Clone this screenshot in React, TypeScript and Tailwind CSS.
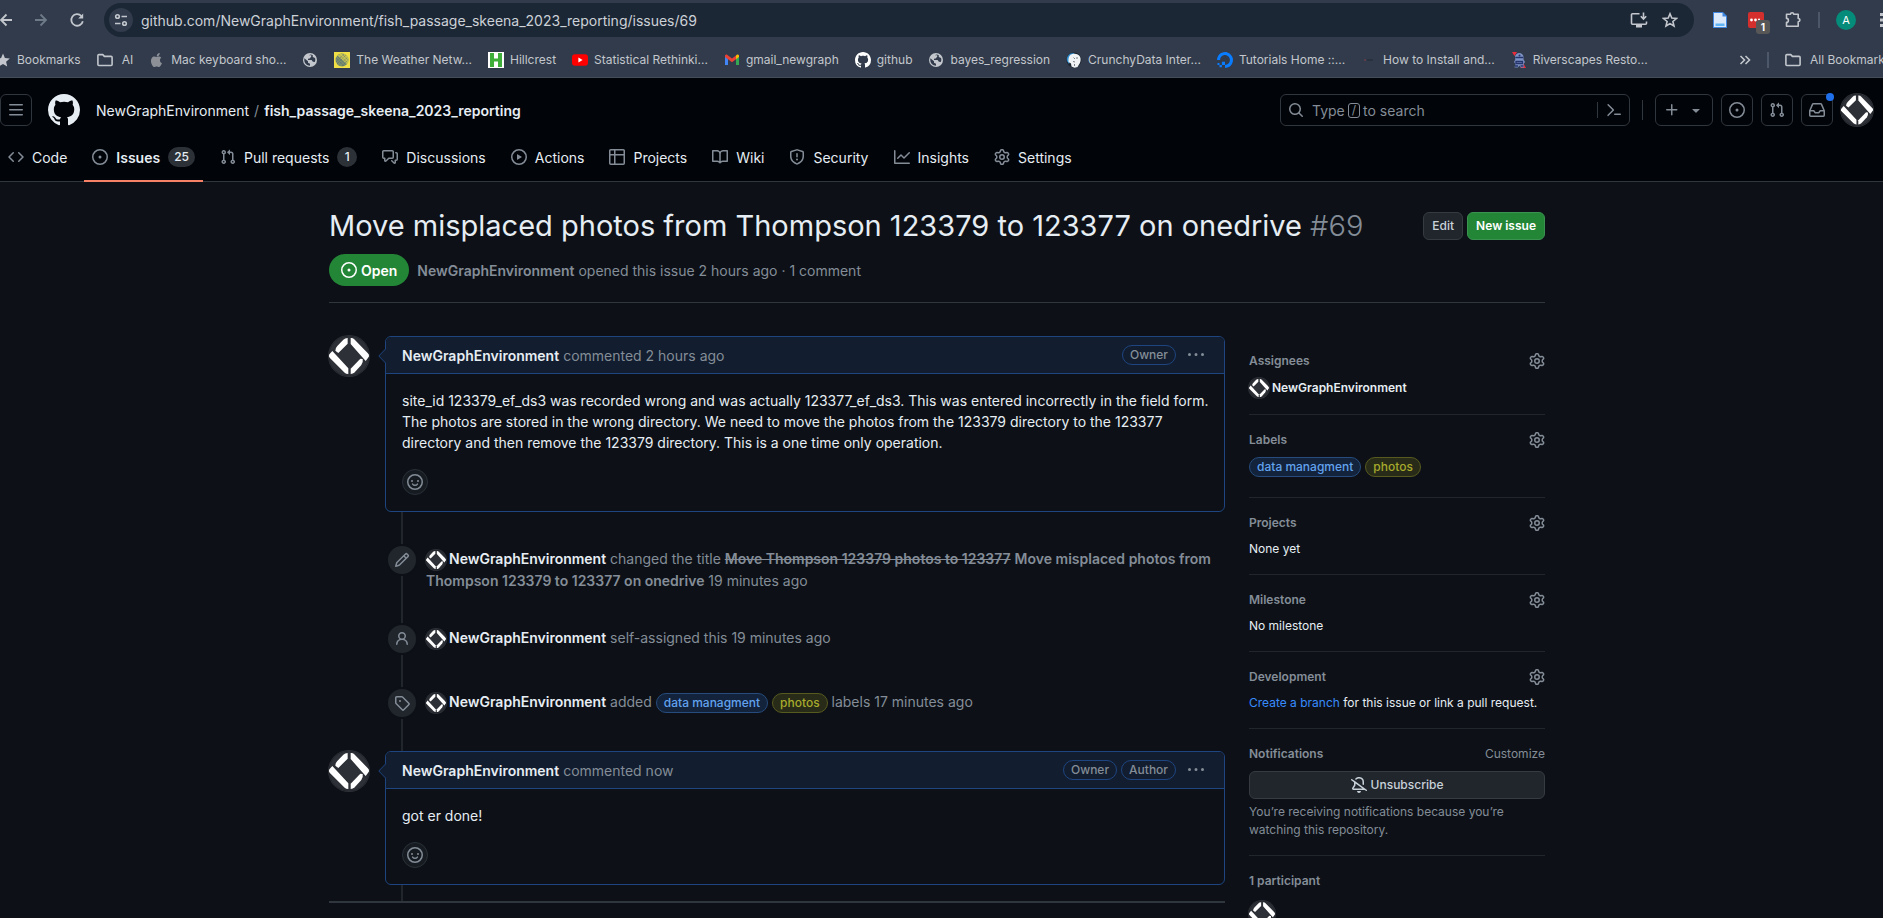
import React from 'react';

const icons = {
  code: 'm11.28 3.22 4.25 4.25a.75.75 0 0 1 0 1.06l-4.25 4.25a.749.749 0 0 1-1.275-.326.749.749 0 0 1 .215-.734L13.94 8l-3.72-3.72a.749.749 0 0 1 .326-1.275.749.749 0 0 1 .734.215Zm-6.56 0a.751.751 0 0 1 1.042.018.751.751 0 0 1 .018 1.042L2.06 8l3.72 3.72a.749.749 0 0 1-.326 1.275.749.749 0 0 1-.734-.215L.47 8.53a.75.75 0 0 1 0-1.06Z',
  issue: 'M8 9.5a1.5 1.5 0 1 0 0-3 1.5 1.5 0 0 0 0 3ZM8 0a8 8 0 1 1 0 16A8 8 0 0 1 8 0ZM1.5 8a6.5 6.5 0 1 0 13 0 6.5 6.5 0 0 0-13 0Z',
  pull: 'M1.5 3.25a2.25 2.25 0 1 1 3 2.122v5.256a2.251 2.251 0 1 1-1.5 0V5.372A2.25 2.25 0 0 1 1.5 3.25Zm5.677-.177L9.573.677A.25.25 0 0 1 10 .854V2.5h1A2.5 2.5 0 0 1 13.5 5v5.628a2.251 2.251 0 1 1-1.5 0V5a1 1 0 0 0-1-1h-1v1.646a.25.25 0 0 1-.427.177L7.177 3.427a.25.25 0 0 1 0-.354ZM3.75 2.5a.75.75 0 1 0 0 1.5.75.75 0 0 0 0-1.5Zm0 9.5a.75.75 0 1 0 0 1.5.75.75 0 0 0 0-1.5Zm8.25.75a.75.75 0 1 0 1.5 0 .75.75 0 0 0-1.5 0Z',
  discussion: 'M1.75 1h8.5c.966 0 1.75.784 1.75 1.75v5.5A1.75 1.75 0 0 1 10.25 10H7.061l-2.574 2.573A1.458 1.458 0 0 1 2 11.543V10h-.25A1.75 1.75 0 0 1 0 8.25v-5.5C0 1.784.784 1 1.75 1ZM1.5 2.75v5.5c0 .138.112.25.25.25h1a.75.75 0 0 1 .75.75v2.19l2.72-2.72a.749.749 0 0 1 .53-.22h3.5a.25.25 0 0 0 .25-.25v-5.5a.25.25 0 0 0-.25-.25h-8.5a.25.25 0 0 0-.25.25Zm13 2a.25.25 0 0 0-.25-.25h-.5a.75.75 0 0 1 0-1.5h.5c.966 0 1.75.784 1.75 1.75v5.5A1.75 1.75 0 0 1 14.25 12H14v1.543a1.458 1.458 0 0 1-2.487 1.03L9.22 12.28a.749.749 0 0 1 .326-1.275.749.749 0 0 1 .734.215l2.22 2.22v-2.19a.75.75 0 0 1 .75-.75h1a.25.25 0 0 0 .25-.25Z',
  play: 'M8 0a8 8 0 1 1 0 16A8 8 0 0 1 8 0ZM1.5 8a6.5 6.5 0 1 0 13 0 6.5 6.5 0 0 0-13 0Zm4.879-2.773 4.264 2.559a.25.25 0 0 1 0 .428l-4.264 2.559A.25.25 0 0 1 6 10.559V5.442a.25.25 0 0 1 .379-.215Z',
  table: 'M0 1.75C0 .784.784 0 1.75 0h12.5C15.216 0 16 .784 16 1.75v12.5A1.75 1.75 0 0 1 14.25 16H1.75A1.75 1.75 0 0 1 0 14.25ZM6.5 6.5v8h7.75a.25.25 0 0 0 .25-.25V6.5Zm8-1.5V1.75a.25.25 0 0 0-.25-.25H6.5V5Zm-13 1.5v7.75c0 .138.112.25.25.25H5v-8ZM5 5V1.5H1.75a.25.25 0 0 0-.25.25V5Z',
  book: 'M0 1.75A.75.75 0 0 1 .75 1h4.253c1.227 0 2.317.59 3 1.501A3.743 3.743 0 0 1 11.006 1h4.245a.75.75 0 0 1 .75.75v10.5a.75.75 0 0 1-.75.75h-4.507a2.25 2.25 0 0 0-1.591.659l-.622.621a.75.75 0 0 1-1.06 0l-.622-.621A2.25 2.25 0 0 0 5.258 13H.75a.75.75 0 0 1-.75-.75Zm7.251 10.324.004-5.073-.002-2.253A2.25 2.25 0 0 0 5.003 2.5H1.5v9h3.757a3.75 3.75 0 0 1 1.994.574ZM8.755 4.75l-.004 7.322a3.752 3.752 0 0 1 1.992-.572H14.5v-9h-3.495a2.25 2.25 0 0 0-2.25 2.25Z',
  shield: 'M7.467.133a1.748 1.748 0 0 1 1.066 0l5.25 1.68A1.75 1.75 0 0 1 15 3.48V7c0 1.566-.32 3.182-1.303 4.682-.983 1.498-2.585 2.813-5.032 3.855a1.697 1.697 0 0 1-1.33 0c-2.447-1.042-4.049-2.357-5.032-3.855C1.32 10.182 1 8.566 1 7V3.48a1.75 1.75 0 0 1 1.217-1.667Zm.61 1.429a.25.25 0 0 0-.153 0l-5.25 1.68a.25.25 0 0 0-.174.238V7c0 1.358.275 2.666 1.057 3.86.784 1.194 2.121 2.34 4.366 3.297a.196.196 0 0 0 .154 0c2.245-.956 3.582-2.104 4.366-3.298C13.225 9.666 13.5 8.36 13.5 7V3.48a.251.251 0 0 0-.174-.237l-5.25-1.68ZM8.75 4.75v3a.75.75 0 0 1-1.5 0v-3a.75.75 0 0 1 1.5 0ZM9 10.5a1 1 0 1 1-2 0 1 1 0 0 1 2 0Z',
  graph: 'M1.5 1.75V13.5h13.75a.75.75 0 0 1 0 1.5H.75a.75.75 0 0 1-.75-.75V1.75a.75.75 0 0 1 1.5 0Zm14.28 2.53-5.25 5.25a.75.75 0 0 1-1.06 0L7 7.06 4.28 9.78a.751.751 0 0 1-1.042-.018.751.751 0 0 1-.018-1.042l3.25-3.25a.75.75 0 0 1 1.06 0L10 7.94l4.72-4.72a.751.751 0 0 1 1.042.018.751.751 0 0 1 .018 1.042Z',
  gear: 'M8 0a8.2 8.2 0 0 1 .701.031C9.444.095 9.99.645 10.16 1.29l.288 1.107c.018.066.079.158.212.224.231.114.454.243.668.386.123.082.233.09.299.071l1.103-.303c.644-.176 1.392.021 1.82.63.27.385.506.792.704 1.218.315.675.111 1.422-.364 1.891l-.814.806c-.049.048-.098.147-.088.294.016.257.016.515 0 .772-.01.147.038.246.088.294l.814.806c.475.469.679 1.216.364 1.891a7.977 7.977 0 0 1-.704 1.217c-.428.61-1.176.807-1.82.63l-1.102-.302c-.067-.019-.177-.011-.3.071a5.909 5.909 0 0 1-.668.386c-.133.066-.194.158-.211.224l-.29 1.106c-.168.646-.715 1.196-1.458 1.26a8.006 8.006 0 0 1-1.402 0c-.743-.064-1.289-.614-1.458-1.26l-.289-1.106c-.018-.066-.079-.158-.212-.224a5.738 5.738 0 0 1-.668-.386c-.123-.082-.233-.09-.299-.071l-1.103.303c-.644.176-1.392-.021-1.82-.63a8.12 8.12 0 0 1-.704-1.218c-.315-.675-.111-1.422.363-1.891l.815-.806c.05-.048.098-.147.088-.294a6.214 6.214 0 0 1 0-.772c.01-.147-.038-.246-.088-.294l-.815-.806C.635 6.045.431 5.298.746 4.623a7.92 7.92 0 0 1 .704-1.217c.428-.61 1.176-.807 1.82-.63l1.102.302c.067.019.177.011.3-.071.214-.143.437-.272.668-.386.133-.066.194-.158.211-.224l.29-1.106C6.009.645 6.556.095 7.299.03 7.53.01 7.764 0 8 0Zm-.571 1.525c-.036.003-.108.036-.137.146l-.289 1.105c-.147.561-.549.967-.998 1.189-.173.086-.34.183-.5.29-.417.278-.97.423-1.529.27l-1.103-.303c-.109-.03-.175.016-.195.045-.22.312-.412.644-.573.99-.014.031-.021.11.059.19l.815.806c.411.406.562.957.53 1.456a4.709 4.709 0 0 0 0 .582c.032.499-.119 1.05-.53 1.456l-.815.806c-.081.08-.073.159-.059.19.162.346.353.677.573.989.02.03.085.076.195.046l1.102-.303c.56-.153 1.113-.008 1.53.27.161.107.328.204.501.29.447.222.85.629.997 1.189l.289 1.105c.029.109.101.143.137.146a6.6 6.6 0 0 0 1.142 0c.036-.003.108-.036.137-.146l.289-1.105c.147-.561.549-.967.998-1.189.173-.086.34-.183.5-.29.417-.278.97-.423 1.529-.27l1.103.303c.109.029.175-.016.195-.045.22-.313.411-.644.573-.99.014-.031.021-.11-.059-.19l-.815-.806c-.411-.406-.562-.957-.53-1.456a4.709 4.709 0 0 0 0-.582c-.032-.499.119-1.05.53-1.456l.815-.806c.081-.08.073-.159.059-.19a6.464 6.464 0 0 0-.573-.989c-.02-.03-.085-.076-.195-.046l-1.102.303c-.56.153-1.113.008-1.53-.27a4.44 4.44 0 0 0-.501-.29c-.447-.222-.85-.629-.997-1.189l-.289-1.105c-.029-.11-.101-.143-.137-.146a6.6 6.6 0 0 0-1.142 0ZM11 8a3 3 0 1 1-6 0 3 3 0 0 1 6 0ZM9.5 8a1.5 1.5 0 1 0-3.001.001A1.5 1.5 0 0 0 9.5 8Z',
  pencil: 'M11.013 1.427a1.75 1.75 0 0 1 2.474 0l1.086 1.086a1.75 1.75 0 0 1 0 2.474l-8.61 8.61c-.21.21-.47.364-.756.445l-3.251.93a.75.75 0 0 1-.927-.928l.929-3.25c.081-.286.235-.547.445-.758l8.61-8.61Zm.176 4.823L9.75 4.81l-6.286 6.287a.253.253 0 0 0-.064.108l-.558 1.953 1.953-.558a.253.253 0 0 0 .108-.064Zm1.238-3.763a.25.25 0 0 0-.354 0L10.811 3.75l1.439 1.44 1.263-1.263a.25.25 0 0 0 0-.354Z',
  person: 'M10.561 8.073a6.005 6.005 0 0 1 3.432 5.142.75.75 0 1 1-1.498.07 4.5 4.5 0 0 0-8.99 0 .75.75 0 0 1-1.498-.07 6.004 6.004 0 0 1 3.431-5.142 3.999 3.999 0 1 1 5.123 0ZM10.5 5a2.5 2.5 0 1 0-5 0 2.5 2.5 0 0 0 5 0Z',
  tag: 'M1 7.775V2.75C1 1.784 1.784 1 2.75 1h5.025c.464 0 .91.184 1.238.513l6.25 6.25a1.75 1.75 0 0 1 0 2.474l-5.026 5.026a1.75 1.75 0 0 1-2.474 0l-6.25-6.25A1.752 1.752 0 0 1 1 7.775Zm1.5 0c0 .066.026.13.073.177l6.25 6.25a.25.25 0 0 0 .354 0l5.025-5.025a.25.25 0 0 0 0-.354l-6.25-6.25a.25.25 0 0 0-.177-.073H2.75a.25.25 0 0 0-.25.25ZM6 5a1 1 0 1 1 0 2 1 1 0 0 1 0-2Z',
  bellSlash: 'm4.182 4.31.016.011 10.104 7.316.013.01 1.375.996a.75.75 0 1 1-.88 1.214L13.626 13H2.518a1.516 1.516 0 0 1-1.263-2.36l1.703-2.554A.255.255 0 0 0 3 7.947V5.305L.31 3.357a.75.75 0 1 1 .88-1.214Zm7.373 7.19L4.5 6.391v1.556c0 .346-.102.683-.294.97l-1.703 2.556a.017.017 0 0 0-.003.01c0 .005.002.009.005.012l.006.004.007.001ZM8 1.5c-.997 0-1.895.416-2.534 1.086A.75.75 0 1 1 4.38 1.55 5 5 0 0 1 13 5v2.373a.75.75 0 0 1-1.5 0V5A3.5 3.5 0 0 0 8 1.5ZM8 16a2 2 0 0 1-1.985-1.75c-.017-.137.097-.25.235-.25h3.5c.138 0 .252.113.235.25A2 2 0 0 1 8 16Z',
  inbox: 'M2.8 2.06A1.75 1.75 0 0 1 4.41 1h7.18c.7 0 1.333.417 1.61 1.06l2.74 6.395c.04.093.06.194.06.295v4.5A1.75 1.75 0 0 1 14.25 15H1.75A1.75 1.75 0 0 1 0 13.25v-4.5c0-.101.02-.202.06-.295Zm1.61.44a.25.25 0 0 0-.23.152L1.887 8H4.75a.75.75 0 0 1 .6.3L6.625 10h2.75l1.275-1.7a.75.75 0 0 1 .6-.3h2.863L11.82 2.652a.25.25 0 0 0-.23-.152Zm10.09 7h-2.875l-1.275 1.7a.75.75 0 0 1-.6.3h-3.5a.75.75 0 0 1-.6-.3L4.375 9.5H1.5v3.75c0 .138.112.25.25.25h12.5a.25.25 0 0 0 .25-.25Z',
  search: 'M10.68 11.74a6 6 0 0 1-7.922-8.982 6 6 0 0 1 8.982 7.922l3.04 3.04a.749.749 0 0 1-.326 1.275.749.749 0 0 1-.734-.215ZM11.5 7a4.499 4.499 0 1 0-8.997 0A4.499 4.499 0 0 0 11.5 7Z',
  command: 'm6.354 8.04-4.773 4.773a.75.75 0 1 0 1.061 1.06L7.945 8.57a.75.75 0 0 0 0-1.06L2.642 2.206a.75.75 0 0 0-1.06 1.061L6.353 8.04ZM8.75 11.5a.75.75 0 0 0 0 1.5h5.5a.75.75 0 0 0 0-1.5h-5.5Z',
  plus: 'M7.75 2a.75.75 0 0 1 .75.75V7h4.25a.75.75 0 0 1 0 1.5H8.5v4.25a.75.75 0 0 1-1.5 0V8.5H2.75a.75.75 0 0 1 0-1.5H7V2.75A.75.75 0 0 1 7.75 2Z',
  triangle: 'm4.427 7.427 3.396 3.396a.25.25 0 0 0 .354 0l3.396-3.396A.25.25 0 0 0 11.396 7H4.604a.25.25 0 0 0-.177.427Z',
  bars: 'M1 2.75A.75.75 0 0 1 1.75 2h12.5a.75.75 0 0 1 0 1.5H1.75A.75.75 0 0 1 1 2.75Zm0 5A.75.75 0 0 1 1.75 7h12.5a.75.75 0 0 1 0 1.5H1.75A.75.75 0 0 1 1 7.75ZM1.75 12h12.5a.75.75 0 0 1 0 1.5H1.75a.75.75 0 0 1 0-1.5Z',
  kebab: 'M8 9a1.5 1.5 0 1 0 0-3 1.5 1.5 0 0 0 0 3ZM1.5 9a1.5 1.5 0 1 0 0-3 1.5 1.5 0 0 0 0 3Zm13 0a1.5 1.5 0 1 0 0-3 1.5 1.5 0 0 0 0 3Z',
  github: 'M8 0c4.42 0 8 3.58 8 8a8.013 8.013 0 0 1-5.45 7.59c-.4.08-.55-.17-.55-.38 0-.27.01-1.13.01-2.2 0-.75-.25-1.23-.54-1.48 1.78-.2 3.65-.88 3.65-3.95 0-.88-.31-1.59-.82-2.15.08-.2.36-1.02-.08-2.12 0 0-.67-.22-2.2.82-.64-.18-1.32-.27-2-.27-.68 0-1.36.09-2 .27-1.53-1.03-2.2-.82-2.2-.82-.44 1.1-.16 1.92-.08 2.12-.51.56-.82 1.28-.82 2.15 0 3.06 1.86 3.75 3.64 3.95-.23.2-.44.55-.51 1.07-.46.21-1.61.55-2.33-.66-.15-.24-.6-.83-1.23-.82-.67.01-.27.38.01.53.34.19.73.9.82 1.13.16.45.68 1.31 2.69.94 0 .67.01 1.3.01 1.49 0 .21-.15.45-.55.38A7.995 7.995 0 0 1 0 8c0-4.42 3.58-8 8-8Z',
};
type IconName = keyof typeof icons;

function Icon({ name, className = 'size-4' }: { name: IconName; className?: string }) {
  return (
    <svg aria-hidden="true" viewBox="0 0 16 16" fill="currentColor" className={`shrink-0 ${className}`}>
      <path d={icons[name]} />
    </svg>
  );
}

function Avatar({ className }: { className: string }) {
  return (
    <svg role="img" aria-label="NewGraphEnvironment" viewBox="3 3 120 120" className={`shrink-0 rounded-full ring-1 ring-[#2d3036] ${className}`}>
      <circle cx="63" cy="63" r="63" fill="#2d3036" />
      <g fill="#fff">
        <path d="M59 9V26L31 54 22 47Q22 39 28 33L46 14Q51 9 59 9Z" />
        <path d="M13 48 61 100V117Q54 117 50 113L5 68Q0 63 4 58Z" />
        <path d="M68 9Q74 8 78 12L121 56Q126 61 122 66L113 78 68 27Z" />
        <path d="M104 72Q106 82 100 90L80 112Q75 117 68 117V101L97 71Z" />
      </g>
    </svg>
  );
}

/* ---------- Browser chrome ---------- */

const line = { fill: 'none', stroke: 'currentColor', strokeWidth: 1.6 } as const;

function FolderIcon() {
  return (
    <svg aria-hidden="true" viewBox="0 0 16 16" {...line} className="mr-[3px] size-4 shrink-0" strokeLinejoin="round">
      <path d="M.9 3.6c0-.6.4-1 1-1h3.9l1.6 1.8h6.7c.6 0 1 .4 1 1v7.1c0 .6-.4 1-1 1H1.9c-.6 0-1-.4-1-1Z" />
    </svg>
  );
}

function GlobeIcon() {
  return (
    <svg aria-hidden="true" viewBox="0 0 16 16" className="size-4 shrink-0">
      <circle cx="8" cy="8" r="7" fill="#c3c7cd" />
      <path fill="#313b4b" d="M2.3 6.2 6 9.3v1.5l2 1v1.9C4.8 13.6 2.3 11.1 2.3 8ZM7 3.2h2.2v1.600L7.6 6.500l-1.6.2V8h3.600l1.3 1.700 1.9.3c.6-1.2.7-2.700.2-4L10.800 5V3.200C9.600 2.400 8.200 2.200 7 3.200Z" />
    </svg>
  );
}

const favicons: Record<string, React.ReactNode> = {
  star: (
    <svg aria-hidden="true" viewBox="5 0 11 16" className="h-4 w-[11px] shrink-0" fill="#c3c7cd">
      <path d="m8 1.600 1.900 4.500 4.900.4-3.700 3.200 1.100 4.800L8 12l-4.200 2.500 1.100-4.800L1.200 6.500l4.900-.4Z" />
    </svg>
  ),
  folder: <FolderIcon />,
  apple: (
    <svg aria-hidden="true" viewBox="0 0 16 16" className="size-4 shrink-0" fill="#8d9197">
      <path d="M10.700 1c.1 1-.3 1.900-.8 2.500-.6.700-1.400 1.100-2.200 1 0-.9.300-1.800.8-2.400C9.100 1.500 10 1.100 10.700 1ZM13 11.300c-.4.900-.6 1.300-1.100 2-.7 1-1.300 1.800-2.200 1.800-.8 0-1-.5-2.100-.5s-1.400.5-2.200.5c-.9 0-1.600-.9-2.200-1.900C1.600 10.700 1.600 7.500 2.800 6c.7-1 1.600-1.400 2.500-1.400s1.500.5 2.300.5c.8 0 1.300-.5 2.400-.5.8 0 1.700.4 2.300 1.200-2 1.200-1.700 4.600.7 5.500Z" />
    </svg>
  ),
  globe: <GlobeIcon />,
  weather: (
    <svg aria-hidden="true" viewBox="0 0 16 16" className="size-4 shrink-0">
      <rect width="16" height="16" fill="#f0df45" />
      <circle cx="8" cy="8" r="6.5" fill="#7d8f6a" />
      <path d="M8 1.500a6.500 6.500 0 0 1 5 10.600L3.500 3.400A6.500 6.500 0 0 1 8 1.500Z" fill="#c9c552" />
      <path d="m2 6 8 8M3 4l9 9M5 2.500l8.500 8.500M8 1.800 14 8M2 10l8-8M3 12l9-9M5 13.500 13.500 5M8 14l6-6" stroke="#4d6a7a" strokeWidth=".7" strokeDasharray="1 1" />
    </svg>
  ),
  hillcrest: (
    <svg aria-hidden="true" viewBox="0 0 16 16" className="size-4 shrink-0">
      <rect width="16" height="16" fill="#fff" />
      <path d="M2 1h4v5.500h4V1h4v14h-4V9.500H6V15H2Z" fill="#3fae3a" />
    </svg>
  ),
  youtube: (
    <svg aria-hidden="true" viewBox="0 0 16 16" className="size-4 shrink-0">
      <rect y="2.2" width="16" height="11.6" rx="3" fill="#f00" />
      <path d="M6.400 5.600v4.800L10.600 8Z" fill="#fff" />
    </svg>
  ),
  gmail: (
    <svg aria-hidden="true" viewBox="0 0 16 16" className="size-4 shrink-0">
      <path d="M1 4.500V13h3V7Z" fill="#4285f4" />
      <path d="M12 7v6h3V4.500Z" fill="#34a853" />
      <path d="M12 3.600V7.300l3-2.300V4c0-1.400-1.400-1.900-2.400-1.100Z" fill="#fbbc04" />
      <path d="M1 5V4c0-1.400 1.400-1.900 2.400-1.100L8 6.400l4-3v3.900l-4 3Z" fill="#ea4335" />
    </svg>
  ),
  github: <Icon name="github" className="size-4 text-white" />,
  crunchy: (
    <svg aria-hidden="true" viewBox="0 0 16 16" className="size-4 shrink-0">
      <circle cx="8" cy="8" r="7.5" fill="#1d2531" />
      <path d="M1 9C0 4 4 .5 8.500 1L5.500 5 3 12Z" fill="#2f8fd0" />
      <path d="M4.500 2.800C7.500.8 12.500 1.500 14.200 5c1 2.800.3 5.500-1.200 7.500L11.500 15l-3 .8-3-1.300-.5-3-2.500-1.500C2.300 7.500 2.500 4.500 4.500 2.800Z" fill="#f1f3f5" />
      <path d="M7.500 5.500 9 7M11 5v2M7 9.500l2 .5M8.500 12v2" stroke="#59616b" strokeWidth=".8" />
    </svg>
  ),
  ocean: (
    <svg aria-hidden="true" viewBox="0 0 16 16" className="size-4 shrink-0" fill="#0a7cff">
      <path d="M8 16v-3.100c3.300 0 5.800-3.200 4.600-6.700A4.700 4.700 0 0 0 9.800 3.400C6.300 2.200 3.100 4.700 3.100 8H0C0 2.800 5.100-1.300 10.500.4c2.400.7 4.300 2.700 5.100 5.100C17.300 10.900 13.200 16 8 16Z" />
      <path d="M4.900 9.800H8v3.100H4.900ZM2.500 12.900h2.400v2.300H2.500ZM.5 10.900h2v2h-2Z" />
    </svg>
  ),
  rstudio: (
    <svg aria-hidden="true" viewBox="0 0 16 16" className="size-4 shrink-0">
      <path d="M3 7.500h2v1.200H3Z" fill="#7a3b46" />
      <path d="M6 7.500h6v1H6Z" fill="#202833" />
    </svg>
  ),
  riverscapes: (
    <svg aria-hidden="true" viewBox="0 0 16 16" className="size-4 shrink-0">
      <path d="M1 0h5L3.500 4ZM9.500 16H15l-2.500-4.500Z" fill="#ee2b3b" />
      <path d="M4 5a4.200 4 0 0 1 8.500 0v2.500L14 10l-1.500 2 .5 3.500H9.500L8.300 13.500 7 15.500H3.500L4.500 12 3 10l1.300-2.500Z" fill="#7d92c4" />
      <path d="M4.300 5.500h8M5 9.500h6.500v2H5ZM4 14h3M9.500 14h3" fill="none" stroke="#26356e" strokeWidth="1.3" />
      <circle cx="8.500" cy="3.500" r="1" fill="#26356e" />
    </svg>
  ),
};

const bookmarks: [string, string][] = [
  ['star', 'Bookmarks'],
  ['folder', 'AI'],
  ['apple', 'Mac keyboard sho...'],
  ['globe', ''],
  ['weather', 'The Weather Netw...'],
  ['hillcrest', 'Hillcrest'],
  ['youtube', 'Statistical Rethinki...'],
  ['gmail', 'gmail_newgraph'],
  ['github', 'github'],
  ['globe', 'bayes_regression'],
  ['crunchy', 'CrunchyData Inter...'],
  ['ocean', 'Tutorials Home ::...'],
  ['rstudio', 'How to Install and...'],
  ['riverscapes', 'Riverscapes Resto...'],
];

function BrowserChrome() {
  return (
    <div className="shrink-0 border-b border-[#454d58] bg-[#313b4b] text-[#c3c7cd]">
      <div className="flex h-10 items-center">
        <div className="flex w-[104px] shrink-0 items-center gap-5">
          <button aria-label="Back" className="w-[13px]">
            <svg viewBox="3 0 13 16" {...line} strokeWidth={1.8} className="h-4 w-[13px]"><path d="M15 8H4M9.500 2.500 4 8l5.500 5.500" /></svg>
          </button>
          <button aria-label="Forward" className="text-[#6f7a88]">
            <svg viewBox="0 0 16 16" {...line} strokeWidth={1.8} className="size-4"><path d="M2 8h11M7.500 2.500 13 8l-5.500 5.500" /></svg>
          </button>
          <button aria-label="Reload">
            <svg viewBox="0 0 16 16" {...line} strokeWidth={1.8} className="size-4"><path d="M13.800 9.200A5.800 5.800 0 1 1 12.400 4" /><path d="M14.200 1.500v5H9.200Z" fill="currentColor" stroke="none" /></svg>
          </button>
        </div>
        <div className="flex h-[34px] min-w-0 flex-1 items-center gap-2 rounded-full bg-[#1c2735] pr-4 pl-[5px]">
          <button aria-label="View site information" className="flex size-6 shrink-0 items-center justify-center rounded-full bg-[#313b4b]">
            <svg viewBox="0 0 14 14" {...line} className="size-[14px]"><circle cx="3.5" cy="3.5" r="1.8" /><path d="M7.500 3.500H13M1 10.500h5.500" /><circle cx="10.5" cy="10.5" r="1.8" /></svg>
          </button>
          <input
            aria-label="Address and search bar"
            defaultValue="github.com/NewGraphEnvironment/fish_passage_skeena_2023_reporting/issues/69"
            className="h-6 min-w-0 flex-1 bg-transparent text-sm text-[#ccd1d8] outline-none"
          />
          <button aria-label="Install app">
            <svg viewBox="0 0 18 16" {...line} className="h-4 w-[18px]"><path d="M9.500 1.800H2.500a1 1 0 0 0-1 1v8.400a1 1 0 0 0 1 1h13a1 1 0 0 0 1-1V9.500M13.500.5v6M10.800 4.300l2.700 2.700 2.700-2.700" /><path d="M6 13h6v2.500H6Z" fill="currentColor" stroke="none" /></svg>
          </button>
          <button aria-label="Bookmark this tab" className="pl-[6px]">
            <svg viewBox="0 0 16 16" {...line} className="size-4"><path d="m8 1.800 1.800 4.300 4.600.4-3.500 3 1.100 4.500-4-2.400L4 14l1.100-4.500-3.500-3 4.600-.4Z" /></svg>
          </button>
        </div>
        <div className="flex shrink-0 items-center pl-[18px]">
          <button aria-label="Docs extension">
            <svg viewBox="0 0 16 16" className="size-4"><path d="M1 0h10l4 4v12H1Z" fill="#3f86e0" /><path d="M2 1h8.500V4.500H14V15H2Z" fill="#dbe9fb" /><path d="M3.500 11.500h9V14h-9Z" fill="#62b5f5" /></svg>
          </button>
          <button aria-label="Password extension, 1 item" className="relative ml-5 size-4 rounded-[2px] bg-[#d32f2c]">
            <svg viewBox="0 0 16 16" className="size-4" fill="#fff"><circle cx="3.5" cy="8" r="1.4" /><circle cx="7.5" cy="8" r="1.4" /><circle cx="11" cy="7.5" r="1" /></svg>
            <span className="absolute top-2 left-2 flex size-[14px] items-center justify-center rounded-[3px] bg-[#575757] text-[10px] font-bold text-white">1</span>
          </button>
          <button aria-label="Extensions" className="ml-5">
            <svg viewBox="0 0 18 16" {...line} strokeLinejoin="round" className="h-4 w-[18px]"><path d="M2.500 2.300h4c0-2 3.200-2 3.200 0h4.500v4.200c2.300 0 2.300 3.200 0 3.200v4.500H2.500v-3.800c2.500 0 2.500-4 0-4Z" /></svg>
          </button>
          <span className="ml-4 h-4 w-[2px] bg-[#4c586a]" />
          <button aria-label="Profile" className="ml-4 flex size-5 items-center justify-center rounded-full bg-[#048b7a] text-[11px] text-white">A</button>
          <button aria-label="Browser menu" className="ml-6 w-[3px]">
            <svg viewBox="0 0 3 16" className="h-4 w-[3px]" fill="currentColor"><path d="M0 1h3v3H0ZM0 6.500h3v3H0ZM0 12h3v3H0Z" /></svg>
          </button>
        </div>
      </div>
      <nav aria-label="Bookmarks bar" className="flex h-[37px] items-center gap-4 overflow-hidden pt-[2px] text-xs whitespace-nowrap">
        {bookmarks.map(([icon, label], i) => (
          <a key={i} href="#" aria-label={label || 'Bookmark'} className="flex items-center gap-[6px]">
            {favicons[icon]}
            {label}
          </a>
        ))}
        <button aria-label="More bookmarks" className="ml-auto">
          <svg viewBox="0 0 12 16" {...line} className="h-4 w-3"><path d="m1.500 4 4 4-4 4M6.500 4l4 4-4 4" /></svg>
        </button>
        <span className="h-4 w-[2px] bg-[#4c586a]" />
        <div className="w-[98px] shrink-0 overflow-hidden">
          <a href="#" className="flex w-max items-center gap-[6px]"><FolderIcon />All Bookmarks</a>
        </div>
      </nav>
    </div>
  );
}

/* ---------- GitHub header ---------- */

const tabs: { icon: IconName; label: string; count?: number; active?: boolean }[] = [
  { icon: 'code', label: 'Code' },
  { icon: 'issue', label: 'Issues', count: 25, active: true },
  { icon: 'pull', label: 'Pull requests', count: 1 },
  { icon: 'discussion', label: 'Discussions' },
  { icon: 'play', label: 'Actions' },
  { icon: 'table', label: 'Projects' },
  { icon: 'book', label: 'Wiki' },
  { icon: 'shield', label: 'Security' },
  { icon: 'graph', label: 'Insights' },
  { icon: 'gear', label: 'Settings' },
];

const square = 'flex size-8 items-center justify-center rounded-md border border-[#30363d] text-[#848d97]';

function SiteHeader() {
  return (
    <header className="shrink-0 border-b border-[#30363d] bg-[#010409] pt-4 text-[#e6edf3]">
      <div className="flex items-center pr-[10px] pb-2">
        <button aria-label="Open menu" className={square}><Icon name="bars" /></button>
        <a href="#" aria-label="GitHub home" className="ml-4 text-[#e6edf3]"><Icon name="github" className="size-8" /></a>
        <a href="#" className="ml-4">NewGraphEnvironment</a>
        <span className="mx-[5px] text-[#848d97]">/</span>
        <a href="#" className="font-semibold">fish_passage_skeena_2023_reporting</a>
        <button className="ml-auto flex h-8 w-[350px] items-center rounded-md border border-[#30363d] px-[7px] text-[#848d97]">
          <Icon name="search" />
          <span className="ml-2 flex items-center gap-[3px]">Type <kbd className="flex h-[15px] items-center rounded-[3px] border border-[#848d97] px-[3px] font-[Inter] text-xs">/</kbd> to search</span>
          <span className="ml-auto h-4 w-px bg-[#30363d]" />
          <Icon name="command" className="ml-2 size-4" />
        </button>
        <span className="mx-3 h-5 w-px bg-[#30363d]" />
        <div className="flex gap-2">
          <button aria-label="Create new" className="flex h-8 w-[58px] items-center gap-2 rounded-md border border-[#30363d] pl-2 text-[#848d97]">
            <Icon name="plus" /><Icon name="triangle" />
          </button>
          <button aria-label="Your issues" className={square}><Icon name="issue" /></button>
          <button aria-label="Your pull requests" className={square}><Icon name="pull" /></button>
          <button aria-label="Inbox, unread" className={`relative ${square}`}>
            <Icon name="inbox" />
            <span className="absolute -top-[2px] -right-[2px] size-2 rounded-full bg-[#1f6feb]" />
          </button>
          <button aria-label="Open profile menu"><Avatar className="size-8" /></button>
        </div>
      </div>
      <nav aria-label="Repository" className="flex h-[47px] items-stretch gap-[9px]">
        {tabs.map((t) => (
          <a
            key={t.label}
            href="#"
            aria-current={t.active ? 'page' : undefined}
            className={`flex h-12 items-center gap-2 border-b-2 px-2 ${t.active ? 'border-[#f78166] font-semibold' : 'border-transparent'}`}
          >
            <Icon name={t.icon} className="size-4 text-[#848d97]" />
            {t.label}
            {t.count !== undefined && (
              <span className="flex h-5 min-w-5 items-center justify-center rounded-full bg-[#2c3138] px-[6px] text-xs font-medium">{t.count}</span>
            )}
          </a>
        ))}
      </nav>
    </header>
  );
}

/* ---------- Issue ---------- */

function DataLabel() {
  return <a href="#" className="inline-flex h-5 items-center rounded-full border border-[#264b7c] bg-[#12233b] px-[7px] align-middle text-xs font-medium text-[#62a2ee]">data managment</a>;
}
function PhotosLabel() {
  return <a href="#" className="inline-flex h-5 items-center rounded-full border border-[#575a1e] bg-[#282b18] px-[7px] align-middle text-xs font-medium text-[#a7aa2c]">photos</a>;
}

function Comment({ when, roles, children }: { when: string; roles: string[]; children: React.ReactNode }) {
  return (
    <article className="flex items-start">
      <a href="#" className="mr-4 shrink-0"><Avatar className="size-10" /></a>
      <div className="relative min-w-0 flex-1 rounded-md border border-[#1e4580] bg-[#0d1117]">
        <header className="flex h-[37px] items-center gap-1 rounded-t-[5px] border-b border-[#1e4580] bg-[#121d2f] pr-5 pl-4 text-[#848d97]">
          <svg aria-hidden="true" viewBox="0 0 8 16" className="absolute top-[11px] -left-[8px] h-4 w-2">
            <path d="M8 .5.8 8 8 15.500Z" fill="#121d2f" />
            <path d="M8 .5.8 8 8 15.500" fill="none" stroke="#1e4580" />
          </svg>
          <a href="#" className="font-semibold text-[#e6edf3]">NewGraphEnvironment</a>
          <span className="mr-auto">commented {when}</span>
          {roles.map((r) => (
            <span key={r} className="flex h-5 items-center rounded-full border border-[#1e4580] px-[7px] text-xs font-medium">{r}</span>
          ))}
          <button aria-label="Show options" className="ml-2"><Icon name="kebab" /></button>
        </header>
        <div className="py-4 pr-2 pl-4">
          <p className="text-[#e6edf3]">{children}</p>
          <button aria-label="Add reaction" className="mt-4 flex size-[26px] items-center justify-center rounded-full border border-[#2a3038] bg-[#161b22] text-[#848d97]">
            <svg aria-hidden="true" viewBox="0 0 16 16" className="size-4" fill="none" stroke="currentColor" strokeWidth="1.5" strokeLinecap="round">
              <circle cx="8" cy="8" r="7.25" />
              <path d="M5.600 10.100c1.200 1.600 3.600 1.600 4.800 0" />
              <circle cx="5" cy="7" r="1" fill="currentColor" stroke="none" />
              <circle cx="11" cy="7" r="1" fill="currentColor" stroke="none" />
            </svg>
          </button>
        </div>
      </div>
    </article>
  );
}

function Event({ icon, children }: { icon: IconName; children: React.ReactNode }) {
  return (
    <div className="ml-[57px] flex items-start gap-2 py-4 text-[#848d97]">
      <span className="relative flex size-8 shrink-0 items-center justify-center rounded-full border-2 border-[#0d1117] bg-[#21262d]">
        <Icon name={icon} />
      </span>
      <p className="min-w-0 flex-1 pt-1">
        <a href="#" className="font-semibold text-[#e6edf3]">
          <Avatar className="mr-[3px] inline size-5 align-middle" />
          NewGraphEnvironment
        </a>{' '}
        {children}
      </p>
    </div>
  );
}

function SideSection({ title, action, children }: { title: string; action?: React.ReactNode; children: React.ReactNode }) {
  return (
    <section className="border-t border-[#21262d] py-4 text-xs leading-[18px] text-[#e6edf3] first:border-t-0">
      <div className="mb-2 flex h-[18px] items-center justify-between text-[#848d97]">
        <h2 className="font-semibold">{title}</h2>
        {action}
      </div>
      {children}
    </section>
  );
}

function GearButton({ label }: { label: string }) {
  return <button aria-label={`Edit ${label}`}><Icon name="gear" /></button>;
}

export default function App() {
  return (
    <div className="flex h-screen flex-col overflow-hidden bg-[#0d1117] font-[Inter,sans-serif] text-sm leading-[21px]">
      <BrowserChrome />
      <SiteHeader />
      <div className="min-h-0 flex-1 overflow-hidden pr-[9px]">
        <main className="mx-auto max-w-[1280px] px-8 pt-6">
          <div className="border-b border-[#30363d] pb-4">
            <div className="flex items-start justify-between gap-4">
              <h1 className="text-[29px] leading-10 text-[#e6edf3]">
                Move misplaced photos from Thompson 123379 to 123377 on onedrive <span className="font-light text-[#848d97]">#69</span>
              </h1>
              <div className="flex shrink-0 gap-1 pt-[6px] text-xs font-medium">
                <button className="h-7 rounded-md border border-[#363b42] bg-[#21262d] px-2 text-[#c9d1d9]">Edit</button>
                <button className="h-7 rounded-md border border-[#3a9150] bg-[#238636] px-2 font-semibold text-white">New issue</button>
              </div>
            </div>
            <div className="mt-2 flex items-center gap-2 text-[#848d97]">
              <span className="flex h-8 items-center gap-1 rounded-full bg-[#238636] px-3 font-semibold text-white"><Icon name="issue" />Open</span>
              <span><a href="#" className="font-semibold">NewGraphEnvironment</a> opened this issue 2 hours ago · 1 comment</span>
            </div>
          </div>

          <div className="flex gap-6 pt-[33px]">
            <div className="min-w-0 flex-1">
              <div className="relative pb-4 before:absolute before:top-0 before:bottom-0 before:left-[72px] before:w-[2px] before:bg-[#21262d]">
                <div className="relative pb-4">
                  <Comment when="2 hours ago" roles={['Owner']}>
                    site_id 123379_ef_ds3 was recorded wrong and was actually 123377_ef_ds3. This was entered incorrectly in the field form. The photos are stored in the wrong directory. We need to move the photos from the 123379 directory to the 123377 directory and then remove the 123379 directory. This is a one time only operation.
                  </Comment>
                </div>
                <Event icon="pencil">
                  changed the title <del className="font-semibold">Move Thompson 123379 photos to 123377</del>{' '}
                  <ins className="font-semibold no-underline">Move misplaced photos from Thompson 123379 to 123377 on onedrive</ins> 19 minutes ago
                </Event>
                <Event icon="person">self-assigned this 19 minutes ago</Event>
                <Event icon="tag">added <DataLabel /> <PhotosLabel /> labels 17 minutes ago</Event>
                <div className="relative pt-4">
                  <Comment when="now" roles={['Owner', 'Author']}>got er done!</Comment>
                </div>
              </div>
              <div className="border-t-2 border-[#30363d]" />
            </div>

            <aside className="w-[296px] shrink-0">
              <SideSection title="Assignees" action={<GearButton label="assignees" />}>
                <a href="#" className="flex h-5 items-center gap-[3px] font-semibold"><Avatar className="size-5" />NewGraphEnvironment</a>
              </SideSection>
              <SideSection title="Labels" action={<GearButton label="labels" />}>
                <div className="flex h-6 items-start gap-1"><DataLabel /><PhotosLabel /></div>
              </SideSection>
              <SideSection title="Projects" action={<GearButton label="projects" />}>None yet</SideSection>
              <SideSection title="Milestone" action={<GearButton label="milestone" />}>No milestone</SideSection>
              <SideSection title="Development" action={<GearButton label="development" />}>
                <a href="#" className="text-[#388bfd]">Create a branch</a> for this issue or link a pull request.
              </SideSection>
              <SideSection title="Notifications" action={<button>Customize</button>}>
                <button className="flex h-7 w-full items-center justify-center gap-1 rounded-md border border-[#363b42] bg-[#21262d] font-medium text-[#c9d1d9]">
                  <Icon name="bellSlash" />Unsubscribe
                </button>
                <p className="mt-1 text-[#848d97]">You’re receiving notifications because you’re watching this repository.</p>
              </SideSection>
              <SideSection title="1 participant">
                <a href="#" className="block pt-[3px]"><Avatar className="size-[26px]" /></a>
              </SideSection>
            </aside>
          </div>
        </main>
      </div>
    </div>
  );
}
